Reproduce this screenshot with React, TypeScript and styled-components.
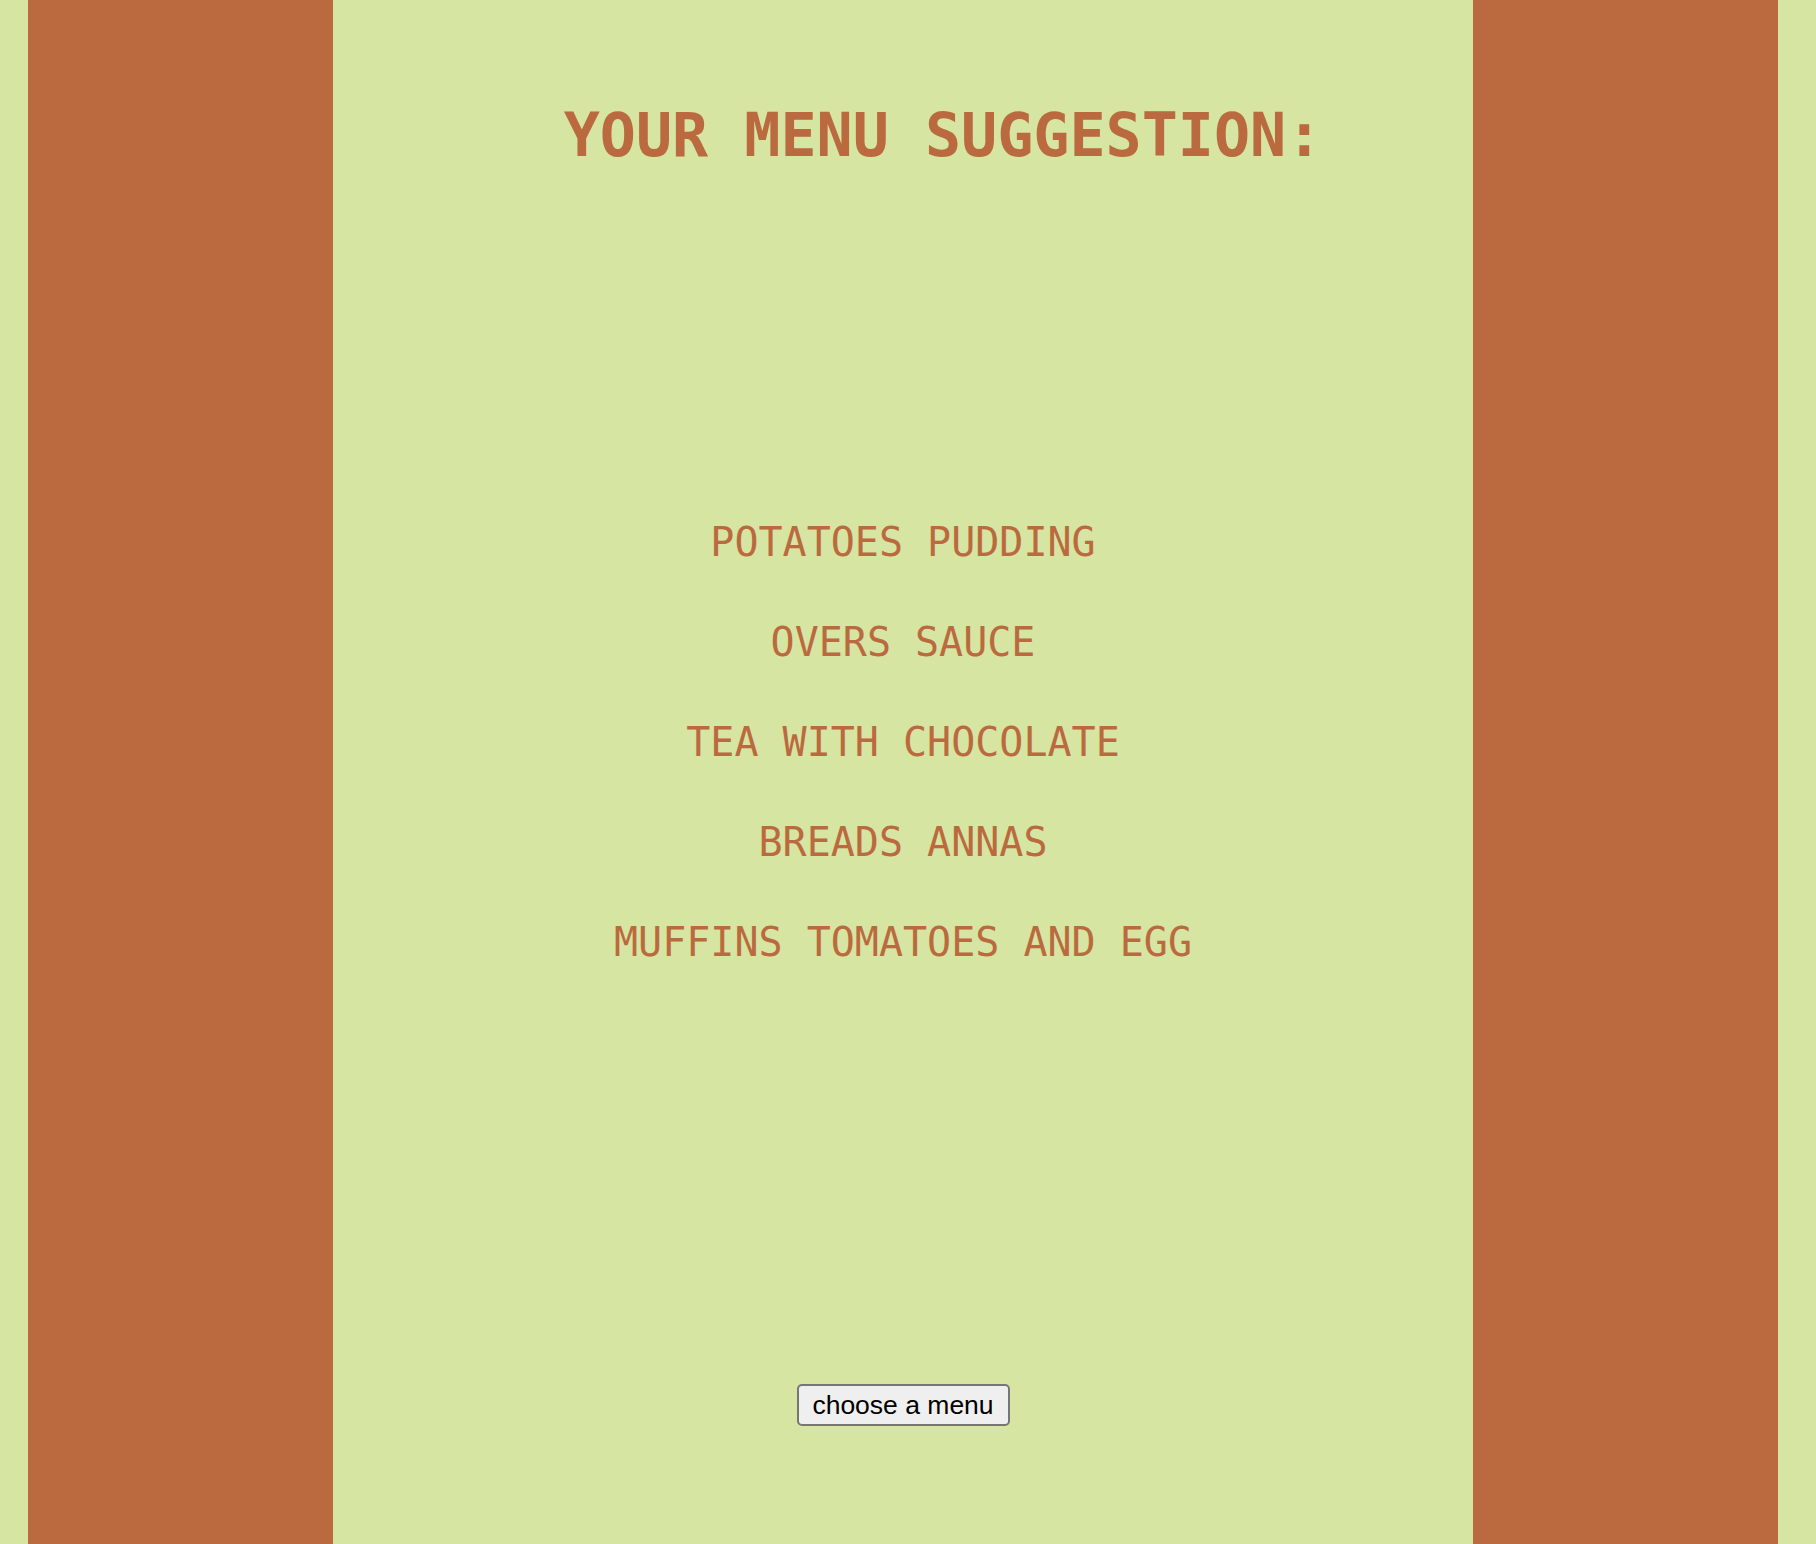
import React from "react";
import styled, { createGlobalStyle } from "styled-components";

const GREEN = "#d6e5a2";
const ORANGE = "#bb6a3f";

const GlobalStyle = createGlobalStyle`
  html, body {
    margin: 0;
    padding: 0;
    background: ${GREEN};
  }
  #root {
    min-height: 100vh;
  }
`;

const Page = styled.div`
  display: flex;
  flex-direction: row;
  height: 1544px;
  padding-left: 28px;
  background: ${GREEN};
  overflow: hidden;
`;

const SideBand = styled.div`
  width: 305px;
  flex: 0 0 305px;
  background: ${ORANGE};
`;

const Center = styled.main`
  width: 1140px;
  flex: 0 0 1140px;
  display: flex;
  flex-direction: column;
  align-items: center;
  padding-top: 100px;
  box-sizing: border-box;
  font-family: "DejaVu Sans Mono", "Liberation Mono", monospace;
  color: ${ORANGE};
`;

const Title = styled.h1`
  margin: 0;
  width: 100%;
  box-sizing: border-box;
  padding-left: 80px;
  text-align: center;
  font-size: 60px;
  line-height: 70px;
  font-weight: bold;
`;

const MenuList = styled.ul`
  list-style: none;
  margin: 322px 0 0 0;
  padding: 0;
  width: 100%;
  display: flex;
  flex-direction: column;
  align-items: center;
`;

const MenuItem = styled.li`
  font-size: 40px;
  line-height: 100px;
  height: 100px;
  text-align: center;
  white-space: nowrap;
`;

const ChooseButton = styled.button`
  margin-top: 392px;
  width: 213px;
  height: 42px;
  box-sizing: border-box;
  padding: 0 12px;
  font-family: "Liberation Sans", Arial, sans-serif;
  font-size: 26.5px;
  color: #000;
  background: #efefef;
  border: 2px solid #767676;
  border-radius: 5px;
  cursor: pointer;
`;

const items = [
  "POTATOES PUDDING",
  "OVERS SAUCE",
  "TEA WITH CHOCOLATE",
  "BREADS ANNAS",
  "MUFFINS TOMATOES AND EGG",
];

export default function App() {
  return (
    <>
      <GlobalStyle />
      <Page>
        <SideBand />
        <Center>
          <Title>YOUR MENU SUGGESTION:</Title>
          <MenuList>
            {items.map((it) => (
              <MenuItem key={it}>{it}</MenuItem>
            ))}
          </MenuList>
          <ChooseButton>choose a menu</ChooseButton>
        </Center>
        <SideBand />
      </Page>
    </>
  );
}
